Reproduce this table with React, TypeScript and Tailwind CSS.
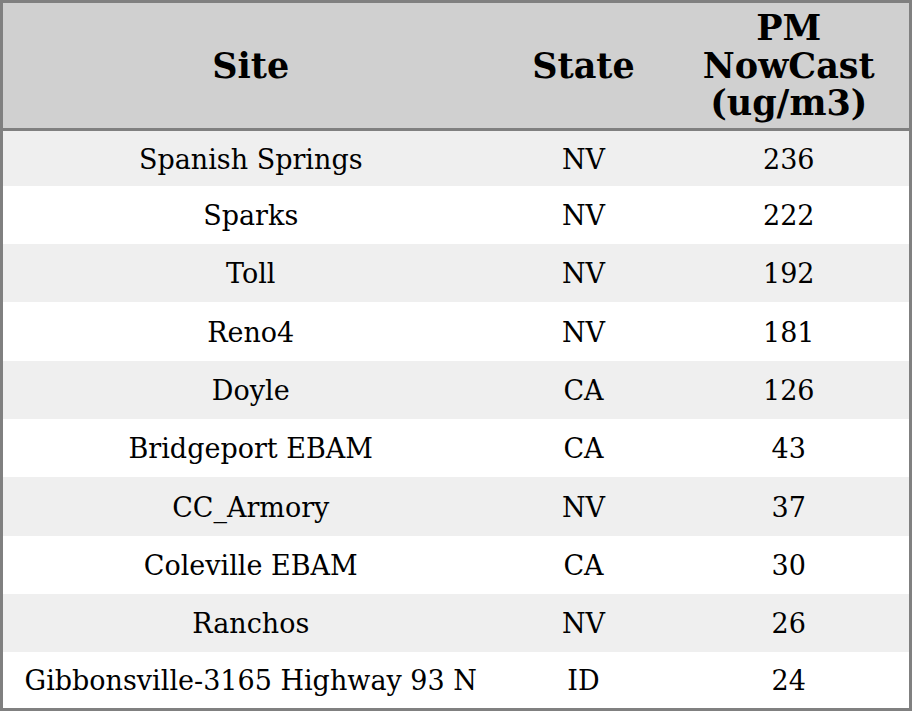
const rows = [
  { site: 'Spanish Springs', state: 'NV', pm: 236 },
  { site: 'Sparks', state: 'NV', pm: 222 },
  { site: 'Toll', state: 'NV', pm: 192 },
  { site: 'Reno4', state: 'NV', pm: 181 },
  { site: 'Doyle', state: 'CA', pm: 126 },
  { site: 'Bridgeport EBAM', state: 'CA', pm: 43 },
  { site: 'CC_Armory', state: 'NV', pm: 37 },
  { site: 'Coleville EBAM', state: 'CA', pm: 30 },
  { site: 'Ranchos', state: 'NV', pm: 26 },
  { site: 'Gibbonsville-3165 Highway 93 N', state: 'ID', pm: 24 },
]

const App = () => {
  return (
    <div className="w-[912px] h-[711px] bg-white font-['DejaVu_Serif',serif] text-black">
      <table className="w-full h-full border-collapse border-[3px] border-[#808080] table-fixed">
        <colgroup>
          <col className="w-[497px]" />
          <col className="w-[170px]" />
          <col />
        </colgroup>
        <thead>
          <tr className="h-[128px] bg-[#d0d0d0] border-b-[3px] border-[#808080]">
            <th className="text-[35px] leading-[37.5px] font-bold text-center">Site</th>
            <th className="text-[35px] leading-[37.5px] font-bold text-center">State</th>
            <th className="text-[35px] leading-[37.5px] font-bold text-center">
              PM
              <br />
              NowCast
              <br />
              (ug/m3)
            </th>
          </tr>
        </thead>
        <tbody>
          {rows.map((r, i) => (
            <tr
              key={r.site}
              className={`${i % 2 === 0 ? 'bg-[#efefef]' : 'bg-white'} ${
                i === 0 ? 'h-[56px]' : i === rows.length - 1 ? 'h-[57px]' : 'h-[58px]'
              }`}
            >
              <td className="pt-[3px] text-[27px] text-center whitespace-nowrap">{r.site}</td>
              <td className="pt-[3px] text-[27px] text-center">{r.state}</td>
              <td className="pt-[3px] text-[27px] text-center">{r.pm}</td>
            </tr>
          ))}
        </tbody>
      </table>
    </div>
  )
}

export default App
